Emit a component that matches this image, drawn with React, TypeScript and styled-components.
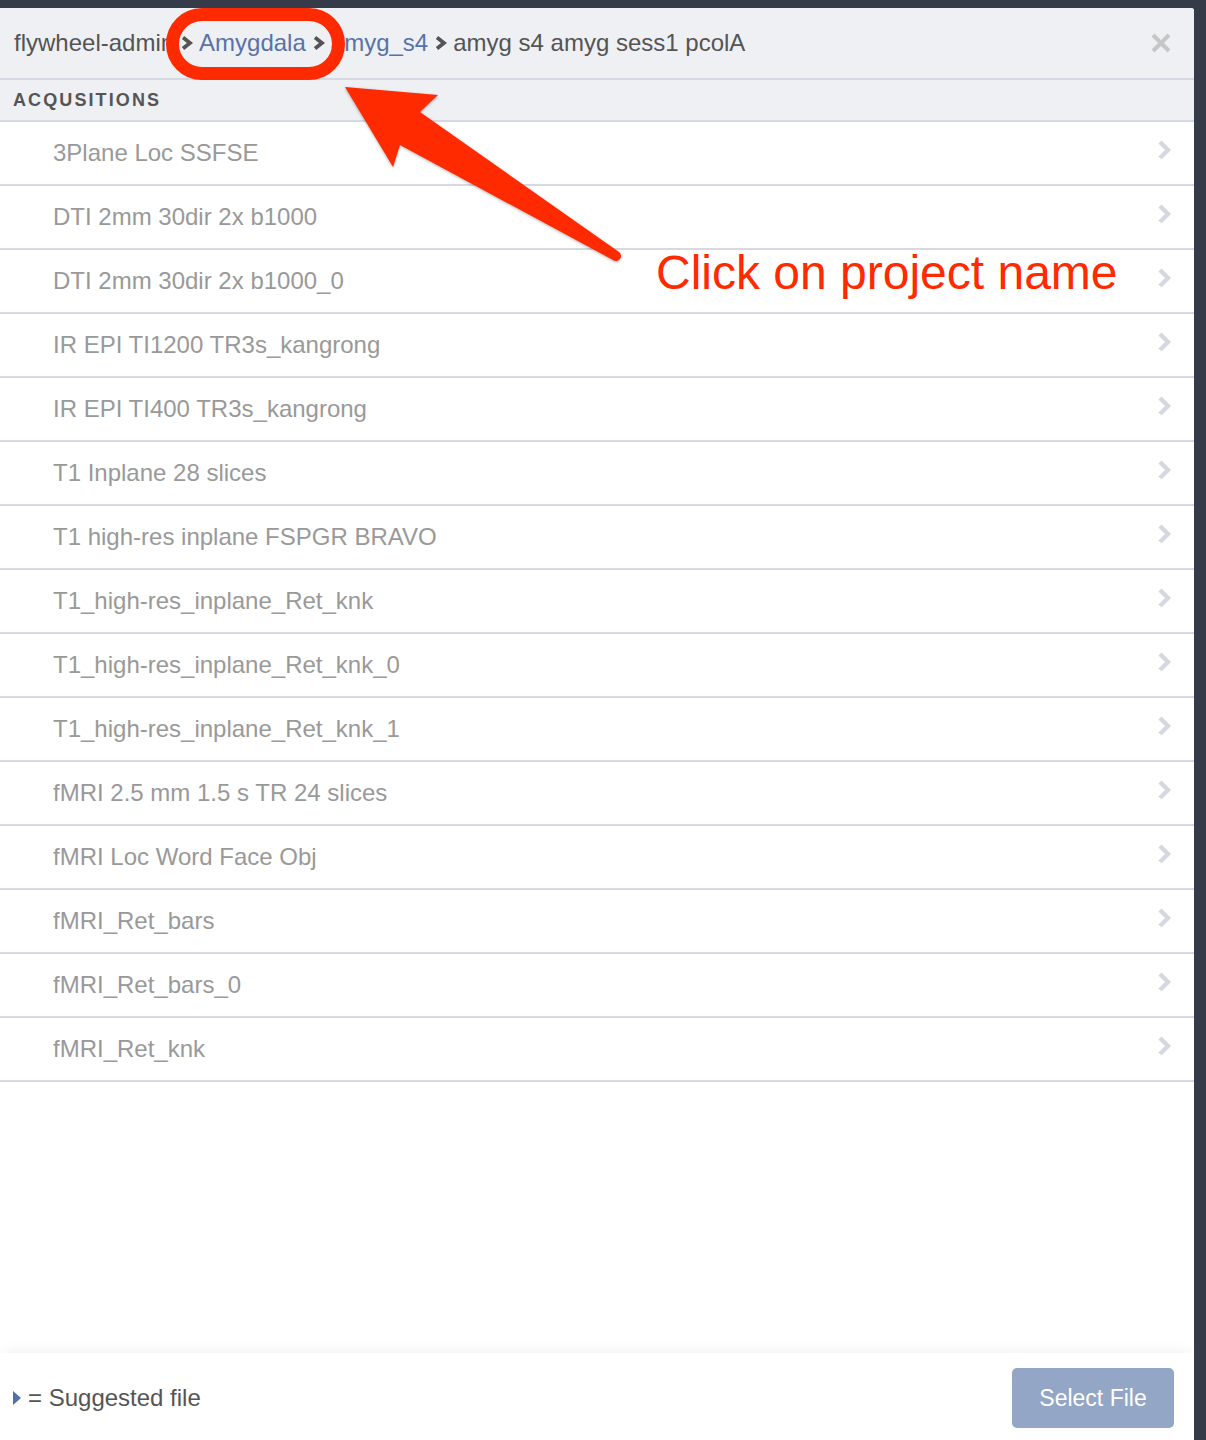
import React from 'react';
import styled, { createGlobalStyle } from 'styled-components';

const Global = createGlobalStyle`
  html, body {
    margin: 0;
    padding: 0;
    background: #353b49;
    overflow: hidden;
  }
  body {
    font-family: "Liberation Sans", Arial, Helvetica, sans-serif;
  }
`;

const Page = styled.div`
  position: relative;
  width: 1206px;
  height: 1440px;
  padding: 8px 12px 0 0;
  box-sizing: border-box;
  overflow: hidden;
`;

const Modal = styled.div`
  display: flex;
  flex-direction: column;
  height: 1435px;
  background: #ffffff;
  border-top-right-radius: 3px;
  overflow: hidden;
`;

const Header = styled.div`
  flex: none;
  height: 70px;
  display: flex;
  align-items: center;
  padding: 0 23px 0 14px;
  background: #eff0f4;
  border-bottom: 2px solid #d6d9e3;
`;

const Crumbs = styled.nav`
  flex: 1;
  display: flex;
  align-items: center;
  gap: 6px;
  font-size: 24px;
  white-space: nowrap;
`;

const Crumb = styled.span<{ $link?: boolean }>`
  color: ${(p) => (p.$link ? '#5872a8' : '#545454')};
  cursor: ${(p) => (p.$link ? 'pointer' : 'default')};
`;

const Sep = styled.svg`
  width: 13px;
  height: 16px;
  flex: none;
`;

const CloseBtn = styled.button`
  width: 20px;
  height: 20px;
  padding: 0;
  border: none;
  background: transparent;
  display: flex;
  cursor: pointer;
`;

const SectionLabel = styled.div`
  flex: none;
  height: 40px;
  display: flex;
  align-items: center;
  padding-left: 13px;
  background: #eff0f4;
  border-bottom: 2px solid #d6d9e3;
  font-size: 18px;
  font-weight: 700;
  letter-spacing: 2.1px;
  color: #555555;
`;

const List = styled.ul`
  flex: none;
  list-style: none;
  margin: 0;
  padding: 0;
`;

const Row = styled.li`
  height: 62px;
  display: flex;
  align-items: center;
  justify-content: space-between;
  padding: 0 23px 0 53px;
  border-bottom: 2px solid #d6d9e3;
  font-size: 24px;
  color: #999999;
  cursor: pointer;
`;

const RowChevron = styled.svg`
  width: 14px;
  height: 22px;
  flex: none;
  margin-top: -6px;
`;

const Spacer = styled.div`
  flex: 1;
`;

const Footer = styled.div`
  position: relative;
  flex: none;
  height: 90px;
  box-sizing: border-box;
  display: flex;
  align-items: center;
  justify-content: space-between;
  padding: 15px 20px 15px 13px;
  background: #ffffff;
  box-shadow: 0 -6px 12px -4px rgba(0, 0, 0, 0.06);
`;

const Legend = styled.div`
  display: flex;
  align-items: center;
  gap: 7px;
  font-size: 24px;
  color: #555555;
`;

const Triangle = styled.span`
  width: 0;
  height: 0;
  border-top: 7px solid transparent;
  border-bottom: 7px solid transparent;
  border-left: 8px solid #5470a8;
`;

const SelectButton = styled.button`
  width: 162px;
  height: 60px;
  border: none;
  border-radius: 5px;
  background: #94a6c5;
  color: #ffffff;
  font-family: "Liberation Sans", Arial, Helvetica, sans-serif;
  font-size: 23px;
  cursor: default;
`;

const Overlay = styled.svg`
  position: absolute;
  left: 0;
  top: 0;
  width: 1206px;
  height: 1440px;
  pointer-events: none;
`;

const ArrowPath = styled.path`
  fill: #ff2a00;
  filter: drop-shadow(0 1px 1.5px rgba(0, 0, 0, 0.3));
`;

const Callout = styled.span`
  position: absolute;
  left: 656px;
  top: 249px;
  font-family: "Liberation Sans", Arial, sans-serif;
  font-size: 48px;
  line-height: 48px;
  color: #ff2a00;
  white-space: nowrap;
  pointer-events: none;
`;

const acquisitions = [
  '3Plane Loc SSFSE',
  'DTI 2mm 30dir 2x b1000',
  'DTI 2mm 30dir 2x b1000_0',
  'IR EPI TI1200 TR3s_kangrong',
  'IR EPI TI400 TR3s_kangrong',
  'T1 Inplane 28 slices',
  'T1 high-res inplane FSPGR BRAVO',
  'T1_high-res_inplane_Ret_knk',
  'T1_high-res_inplane_Ret_knk_0',
  'T1_high-res_inplane_Ret_knk_1',
  'fMRI 2.5 mm 1.5 s TR 24 slices',
  'fMRI Loc Word Face Obj',
  'fMRI_Ret_bars',
  'fMRI_Ret_bars_0',
  'fMRI_Ret_knk',
];

const SepIcon = () => (
  <Sep viewBox="0 0 13 16">
    <path d="M3 2.5 L10 8 L3 13.5" fill="none" stroke="#545454" strokeWidth="3.8" strokeLinejoin="miter" />
  </Sep>
);

const breadcrumb: { label: string; link: boolean }[] = [
  { label: 'flywheel-admin', link: false },
  { label: 'Amygdala', link: true },
  { label: 'amyg_s4', link: true },
  { label: 'amyg s4 amyg sess1 pcolA', link: false },
];

export default function App() {
  return (
    <>
      <Global />
      <Page>
        <Modal>
          <Header>
            <Crumbs>
              {breadcrumb.map((c, i) => (
                <React.Fragment key={c.label}>
                  {i > 0 && <SepIcon />}
                  <Crumb $link={c.link}>{c.label}</Crumb>
                </React.Fragment>
              ))}
            </Crumbs>
            <CloseBtn aria-label="Close">
              <svg width="20" height="20" viewBox="0 0 20 20">
                <path d="M2 2 L18 18 M18 2 L2 18" stroke="#c6c6c6" strokeWidth="4" />
              </svg>
            </CloseBtn>
          </Header>
          <SectionLabel>ACQUSITIONS</SectionLabel>
          <List>
            {acquisitions.map((a) => (
              <Row key={a}>
                <span>{a}</span>
                <RowChevron viewBox="0 0 14 22">
                  <path d="M3 3 L11 11 L3 19" fill="none" stroke="#d3d8e2" strokeWidth="4.4" />
                </RowChevron>
              </Row>
            ))}
          </List>
          <Spacer />
          <Footer>
            <Legend>
              <Triangle />
              <span>= Suggested file</span>
            </Legend>
            <SelectButton>Select File</SelectButton>
          </Footer>
        </Modal>
        <Overlay viewBox="0 0 1206 1440">
          <rect x="172.5" y="14.5" width="166" height="59" rx="29.5" fill="none" stroke="#ff2a00" strokeWidth="13" />
          <ArrowPath d="M345 87 L438 95 L420 112 L619 252 A4.5 4.5 0 0 1 613 260 L400 145 L393 167 Z" />
        </Overlay>
        <Callout>Click on project name</Callout>
      </Page>
    </>
  );
}
